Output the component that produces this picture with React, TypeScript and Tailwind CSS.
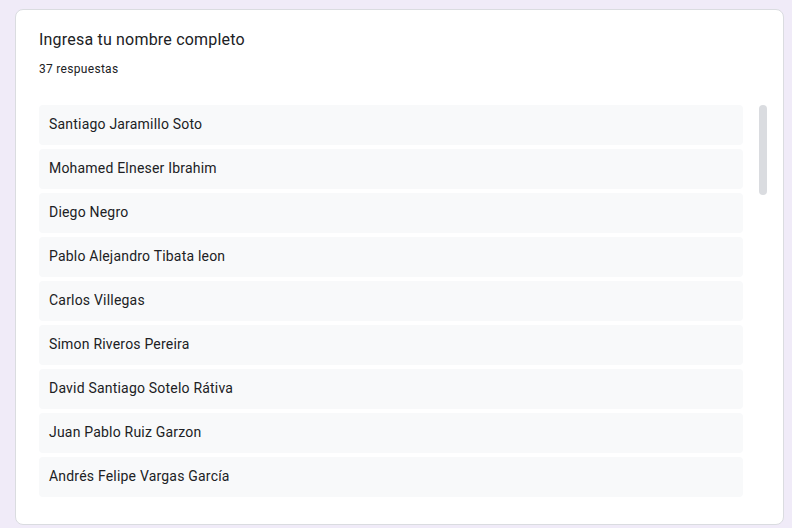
import React from "react";

const names = [
  "Santiago Jaramillo Soto",
  "Mohamed Elneser Ibrahim",
  "Diego Negro",
  "Pablo Alejandro Tibata leon",
  "Carlos Villegas",
  "Simon Riveros Pereira",
  "David Santiago Sotelo Rátiva",
  "Juan Pablo Ruiz Garzon",
  "Andrés Felipe Vargas García",
];

export default function App() {
  return (
    <div
      className="w-[792px] h-[528px] bg-[#f0ebf8] pt-[9px] pl-[15px] overflow-hidden"
      style={{ fontFamily: "Roboto, 'Liberation Sans', sans-serif" }}
    >
      <div className="w-[769px] h-[516px] bg-white border border-[#dadce0] rounded-lg pl-[23px] pr-4 pt-[18px] pb-[27px] flex flex-col">
        <div className="text-[16px] leading-6 tracking-[0.2px] text-[#202124]">Ingresa tu nombre completo</div>
        <div className="mt-[9px] text-[12px] leading-4 tracking-[0.3px] text-[#202124]">37 respuestas</div>
        <div className="mt-7 flex gap-4 h-[392px]">
          <div className="flex-1 overflow-hidden flex flex-col gap-1">
            {names.map((n) => (
              <div
                key={n}
                className="h-10 shrink-0 flex items-center px-[10px] pb-px bg-[#f8f9fa] rounded text-[14px] tracking-[0.2px] text-[#202124]"
              >
                {n}
              </div>
            ))}
          </div>
          <div className="w-2 shrink-0">
            <div className="h-[90px] w-2 rounded bg-[#dadce0]" />
          </div>
        </div>
      </div>
    </div>
  );
}
